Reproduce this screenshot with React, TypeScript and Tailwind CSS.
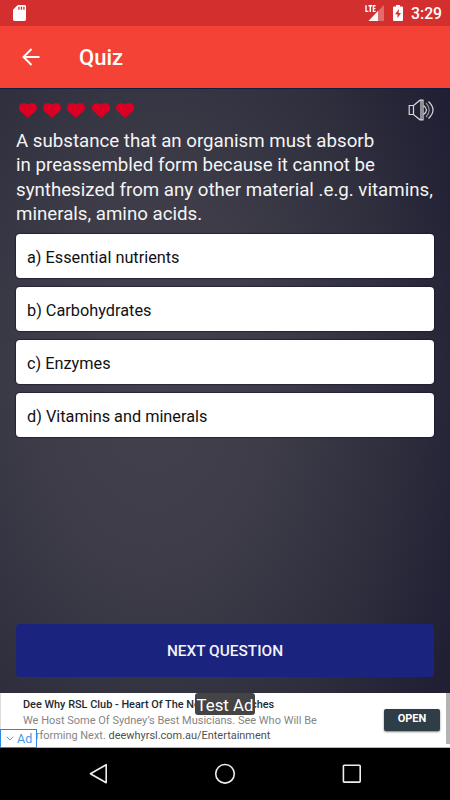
const answers = [
  "a) Essential nutrients",
  "b) Carbohydrates",
  "c) Enzymes",
  "d) Vitamins and minerals",
];

const StatusBar = () => {
  return (
    <div className="flex h-[26px] items-center justify-between bg-[#d32f2f] pl-[13px] pr-[8px] text-white">
      <svg className="h-4 w-[13px]" viewBox="0 0 13 16" fill="none">
        <path
          d="M4.8 0H11.6Q13 0 13 1.4V14.6Q13 16 11.6 16H1.4Q0 16 0 14.6V4.8Z"
          fill="#fff"
        />
        <path d="M5.9 1.8V4.8M8.4 1.8V4.8M10.9 1.8V4.8" stroke="#d32f2f" strokeWidth="1.3" />
      </svg>
      <div className="flex items-center">
        <svg className="h-[26px] w-[20px]" viewBox="0 0 20 26" fill="none">
          <path d="M19 5V21H3.5Z" fill="#fff" fillOpacity=".3" />
          <path d="M13 11V21H3.5Z" fill="#fff" />
          <path
            d="M1 5.2V11.4H3.4M3.4 5.8H7.2M5.3 5.8V12M10.6 5.8H8.4V11.4H10.6M8.4 8.6H10.4"
            stroke="#fff"
            strokeWidth="1.4"
          />
        </svg>
        <svg className="ml-2 h-4 w-[10px]" viewBox="0 0 10 16">
          <path
            d="M3 0H7V1.6H9Q10 1.6 10 2.6V15Q10 16 9 16H1Q0 16 0 15V2.6Q0 1.6 1 1.6H3Z"
            fill="#fff"
          />
          <path d="M6 4L2 9.3H4.5V13.2L8 8H5.6Z" fill="#d32f2f" />
        </svg>
        <span className="ml-[8px] mt-[2px] w-[31px] whitespace-nowrap text-[15.8px] font-medium leading-[26px]">
          3:29
        </span>
      </div>
    </div>
  );
};

const Heart = () => {
  return (
    <svg className="h-[15px] w-[18px]" viewBox="0 0 18 15">
      <path
        d="M9 15L1.200 8C.3 7 0 5.800 0 4.600C0 2 1.800 .2 4.500 .2C6.800 .2 8.300 .9 9 1.800C9.700 .9 11.200 .2 13.500 .2C16.200 .2 18 2 18 4.600C18 5.800 17.700 7 16.800 8Z"
        fill="#db0023"
      />
    </svg>
  );
};

const Speaker = () => {
  return (
    <svg className="h-[22px] w-[26px]" viewBox="0 0 26 22" fill="none" stroke="#d8d8d4" strokeWidth="1.2">
      <path d="M5.500 6.500H1.200V15.500H5.500L12 20.800H15V1.200H12L5.500 6.500V15.500M13 1.200V20.800" />
      <path d="M15.500 6.500Q21.500 11 15.500 15.500" />
      <path d="M18 4Q24.500 11 18 18" strokeOpacity=".6" />
      <path d="M20.500 2.500Q29.500 11 20.500 19.500" />
    </svg>
  );
};

const AdBanner = () => {
  return (
    <div className="relative flex h-[55px] justify-between border-b border-[#b8b8b8] bg-white">
      <div className="whitespace-nowrap border-l border-[#ddd] pl-[22px] pt-1">
        <p className="text-[10.9px] font-medium leading-[16px] text-[#1c2a35]">
          Dee Why RSL Club - Heart Of The Northern Beaches
        </p>
        <p className="text-[11px] leading-[15px] text-[#858585]">
          We Host Some Of Sydney’s Best Musicians. See Who Will Be
        </p>
        <p className="text-[10.95px] leading-[15px] text-[#858585]">
          Performing Next. <span className="text-[#505050]">deewhyrsl.com.au/Entertainment</span>
        </p>
      </div>
      <div className="flex">
        <button className="mr-[6px] mt-4 h-[22px] w-[56px] rounded-[2px] bg-[#2f3e46] pb-[2px] text-[11px] font-bold leading-[20px] text-white shadow-[0_1px_2px_rgba(0,0,0,0.5)]">
          OPEN
        </button>
        <div className="h-[51px] w-1 bg-[#b3b3b3]" />
      </div>
      <span className="absolute left-[195px] top-0 h-[22px] w-[60px] whitespace-nowrap rounded-[3px] bg-[#444] text-center text-[16.8px] leading-[24px] text-white">
        Test Ad
      </span>
      <div className="absolute left-0 top-[36px] flex h-[19px] w-[37px] items-center border border-[#2b88e3] bg-white pl-[5px] text-[#4a98e8]">
        <svg className="h-[5px] w-2" viewBox="0 0 8 5" fill="none">
          <path d="M.8.8L4 4L7.200.8" stroke="currentColor" />
        </svg>
        <span className="ml-[3px] mt-px text-[12.5px] leading-[18px]">Ad</span>
      </div>
    </div>
  );
};

const NavBar = () => {
  return (
    <div className="flex h-[52px] justify-between bg-black pl-[89px] pr-[88px] pt-[15px]">
      <svg className="h-[22px] w-[19px]" viewBox="0 0 19 22" fill="none">
        <path d="M17.200 1.700V19.800L1.400 10.700Z" stroke="#eee" strokeWidth="1.600" strokeLinejoin="round" />
      </svg>
      <svg className="h-[22px] w-[22px]" viewBox="0 0 22 22" fill="none">
        <circle cx="11" cy="10.800" r="9.300" stroke="#eee" strokeWidth="1.600" />
      </svg>
      <svg className="h-[22px] w-[20px]" viewBox="0 0 20 22" fill="none">
        <rect x="1.400" y="2.300" width="16.800" height="16.800" rx=".8" stroke="#eee" strokeWidth="1.600" />
      </svg>
    </div>
  );
};

const App = () => {
  return (
    <div className="flex h-[800px] w-[450px] flex-col overflow-hidden font-['Roboto',sans-serif]">
      <StatusBar />
      <header className="flex h-[62px] items-center bg-[#f44336] pl-[22px] text-white">
        <svg className="h-[18px] w-[18px]" viewBox="0 0 18 18" fill="none">
          <path d="M17.500 9H1.500M9.500 1L1.500 9L9.500 17" stroke="#fff" strokeWidth="1.900" />
        </svg>
        <h1 className="ml-[39px] mt-px text-[22px] font-medium">Quiz</h1>
      </header>
      <main className="flex flex-1 flex-col border-t border-[#14203a] bg-[#302e3d] bg-[radial-gradient(ellipse_340px_540px_at_34%_48%,#42414d_0%,#3d3c48_35%,#2f2e3d_72%,#201f34_100%)] px-4 pb-4">
        <div className="flex h-[40px] justify-between pl-[3px] pt-[10px]">
          <div className="flex gap-[6.200px] pt-1">
            {[1, 2, 3, 4, 5].map((life) => (
              <Heart key={life} />
            ))}
          </div>
          <Speaker />
        </div>
        <p className="whitespace-nowrap text-[18.700px] leading-[24.300px] text-[#f4f4f4]">
          A substance that an organism must absorb
          <br />
          in preassembled form because it cannot be
          <br />
          synthesized from any other material .e.g. vitamins,
          <br />
          minerals, amino acids.
        </p>
        <div className="mt-[8.300px] flex flex-col gap-[9px]">
          {answers.map((answer) => (
            <button
              key={answer}
              className="h-[44px] rounded-[4px] bg-white pl-[11px] pt-[3px] text-left text-[16.300px] text-[#111] shadow-[0_0_1px_1px_rgba(25,22,50,0.6)]"
            >
              {answer}
            </button>
          ))}
        </div>
        <button className="mt-auto h-[53px] rounded-[4px] bg-[#1a237e] pt-[2px] text-[15.400px] font-medium text-[#f3f3f8]">
          NEXT QUESTION
        </button>
      </main>
      <AdBanner />
      <NavBar />
    </div>
  );
};

export default App;
